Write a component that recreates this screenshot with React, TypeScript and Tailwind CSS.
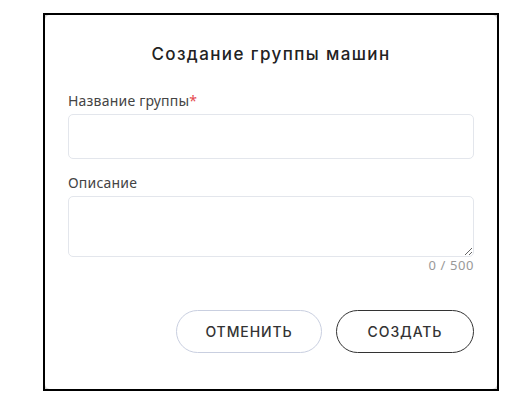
import React from "react";

export default function App() {
  return (
    <div
      className="w-[529px] h-[403px] bg-white pl-[43px] pt-[13px]"
      style={{ fontFamily: "'Noto Sans', Inter, sans-serif" }}
    >
      <div className="w-[456px] h-[378px] border-2 border-black bg-[#d9d9d9]">
        <div className="w-full h-full bg-white rounded-[5px] flex flex-col px-[23px]">
          <h2
            className="mt-[28px] text-center text-[17px] font-medium text-[#222] leading-[22px] tracking-[1.4px]"
            style={{ fontFamily: "Inter, 'Noto Sans', sans-serif" }}
          >
            Создание группы машин
          </h2>
          <label className="mt-[27px] text-[14px] leading-[18px] text-[#444] tracking-[0.2px]">
            Название группы<span className="text-[#e5484d]">*</span>
          </label>
          <input
            className="mt-[4px] h-[45px] w-full rounded-[5px] border border-[#e3e6ec] outline-none px-3 text-[13px]"
            type="text"
          />
          <label className="mt-[15px] text-[14px] leading-[18px] text-[#444] tracking-[0.2px]">
            Описание
          </label>
          <textarea
            className="mt-[4px] h-[61px] w-full rounded-[5px] border border-[#e3e6ec] outline-none px-3 py-2 text-[13px] resize-y"
          />
          <div className="mt-[0px] text-right text-[13px] leading-[17px] text-[#999] tracking-[0.6px]">
            0 / 500
          </div>
          <div
            className="mt-[36px] flex justify-end gap-[14px]"
            style={{ fontFamily: "Inter, 'Noto Sans', sans-serif" }}
          >
            <button className="h-[43px] w-[146px] rounded-full border border-[#c9cfe0] text-[14px] font-medium tracking-[0.9px] text-[#333] bg-white">
              ОТМЕНИТЬ
            </button>
            <button className="h-[43px] w-[138px] rounded-full border border-[#333] text-[14px] font-medium tracking-[0.9px] text-[#333] bg-white">
              СОЗДАТЬ
            </button>
          </div>
        </div>
      </div>
    </div>
  );
}
